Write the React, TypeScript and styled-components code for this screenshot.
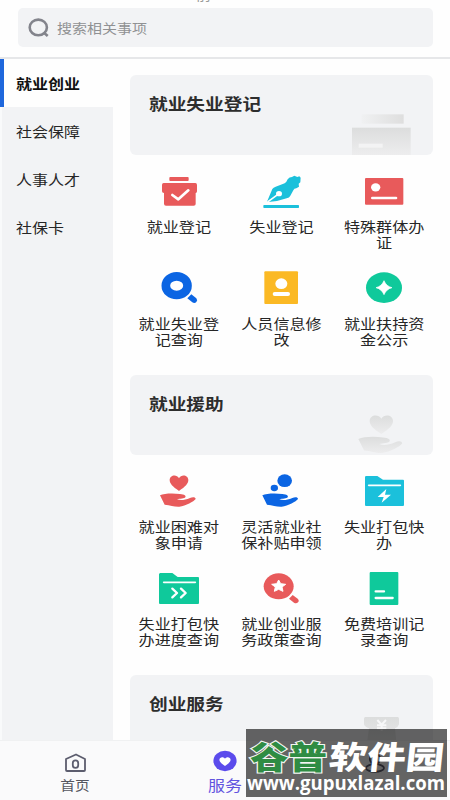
import React from 'react';
import styled, { createGlobalStyle } from 'styled-components';

const GlobalStyle = createGlobalStyle`
  * { box-sizing: border-box; }
  body {
    margin: 0;
    background: #fefefe;
    font-family: "Noto Sans CJK SC", sans-serif;
    overflow: hidden;
  }
`;

const Screen = styled.div`
  position: relative;
  width: 450px;
  height: 800px;
  display: flex;
  flex-direction: column;
  overflow: hidden;
  background: #fefefe;
`;

const StatusStrip = styled.div`
  height: 8px;
  padding-left: 196px;
  overflow: hidden;
  font-size: 15px;
  line-height: 16px;
  color: #999;
  & > span { display: block; margin-top: -14px; }
`;

const SearchBox = styled.div`
  height: 39px;
  margin: 0 17px 10px 18px;
  padding-left: 10px;
  display: flex;
  align-items: center;
  gap: 8px;
  border-radius: 5px;
  background: #f2f3f5;
  flex-shrink: 0;
`;

/* Wide lettering: full advance width with a reduced glyph height. */
const Wide = styled.span<{ $size: number; $color?: string; $weight?: number }>`
  display: block;
  font-size: ${(p) => p.$size}px;
  line-height: 19px;
  font-weight: ${(p) => p.$weight ?? 400};
  color: ${(p) => p.$color ?? '#262626'};
  white-space: pre;
  transform: scaleY(0.87);
`;

const Body = styled.div`
  flex: 1;
  min-height: 0;
  display: flex;
  overflow: hidden;
  border-top: 2px solid #e6e7e9;
`;

const Sidebar = styled.nav`
  width: 113px;
  flex-shrink: 0;
  background: #f2f3f5;
  box-shadow: inset 2px 0 #f9fafb;
`;

const SideItem = styled.div<{ $active?: boolean }>`
  height: 48.2px;
  display: flex;
  align-items: center;
  padding-left: 12px;
  border-left: 4px solid ${(p) => (p.$active ? '#1e67dc' : 'transparent')};
  background: ${(p) => (p.$active ? '#fefefe' : 'transparent')};
`;

const Main = styled.main`
  flex: 1;
  padding: 16px 17px 0;
`;

const Card = styled.div`
  height: 80px;
  padding: 0 22px 0 19px;
  display: flex;
  justify-content: space-between;
  border-radius: 6px;
  background: #f2f3f5;
`;

const CardTitle = styled.h2`
  margin: 18px 0 0;
`;

const CardArt = styled.svg`
  width: 60px;
  height: 42px;
  align-self: flex-end;
`;

const ServiceGrid = styled.div`
  height: 220px;
  margin: 0 -2.5px;
  padding-top: 16px;
  display: grid;
  grid-template-columns: repeat(3, 1fr);
  grid-auto-rows: 96.5px;
`;

const Service = styled.div`
  display: flex;
  flex-direction: column;
  align-items: center;
`;

const Glyph = styled.svg`
  width: 48px;
  height: 40px;
  margin-bottom: 7px;
`;

const Label = styled(Wide)`
  text-align: center;
  transform-origin: top;
`;

const TabBar = styled.footer`
  height: 60px;
  flex-shrink: 0;
  display: grid;
  grid-template-columns: repeat(3, 1fr);
  background: #fafafb;
  border-top: 1px solid #f0f1f2;
`;

const Tab = styled.div`
  display: flex;
  flex-direction: column;
  align-items: center;
  padding-top: 9px;
`;

const TabIcon = styled.svg`
  width: 26px;
  height: 24px;
  margin-bottom: 1px;
`;

const Watermark = styled.div`
  position: absolute;
  left: 246px;
  top: 729px;
  width: 201px;
  height: 68px;
  background: rgba(0, 0, 0, 0.6);
`;

const RED = '#e85a5b';
const CYAN = '#1bc0db';
const BLUE = '#0b65e3';
const YELLOW = '#fbb924';
const GREEN = '#0fc99b';

const HAND =
  'M0 5 C12 -1 38 -2 60 1 C74 2 79 6 76 11 C73 15 61 15 51 17 C60 21 74 20 90 13 C98 9 107 10 107 16 C101 24 78 36 58 39 C43 40 32 34 14 33 Z';
const HEART = 'M28 46 C20 40 0 28 0 14 C0 -2 21 -5 28 8 C35 -5 56 -2 56 14 C56 28 36 40 28 46 Z';

type Entry = { label: string; box: string; art: React.ReactNode };
const line = { fill: 'none', stroke: '#fff', strokeLinecap: 'round', strokeLinejoin: 'round' } as const;

const registration: Entry[] = [
  {
    label: '就业登记',
    box: '90 18 144 120',
    art: (
      <>
        <rect x="133" y="36" width="58" height="12" rx="3" fill={RED} />
        <path d="M116 54H211Q216 54 216 60V79Q216 84 212 84V117Q212 122 206 122H123Q117 122 117 116V84Q111 84 111 79V60Q111 54 116 54Z" fill={RED} />
        <path d="M142 90 160 103 190 76" {...line} strokeWidth="8" />
      </>
    ),
  },
  {
    label: '失业登记',
    box: '397 18 144 120',
    art: (
      <>
        <rect x="416" y="120" width="107" height="9" rx="2" fill={CYAN} />
        <path d="M427 110 443 72Q446 67 453 65L480 55Q486 51 489 43Q494 36 502 36L509 32 518 36 524 34 528 38 527 52 522 56 523 65 515 70Q508 70 506 76L497 92Q494 98 486 100L457 108 437 110Z" fill={CYAN} />
        <path d="M430 110 460 88" {...line} strokeWidth="5" />
        <ellipse cx="463" cy="86" rx="9" ry="8" fill="#fff" />
      </>
    ),
  },
  {
    label: '特殊群体办\n证',
    box: '225 18 144 120',
    art: (
      <>
        <rect x="240" y="39" width="115" height="80" rx="3" fill={RED} />
        <ellipse cx="272" cy="67" rx="14" ry="12.5" fill="#fff" />
        <path d="M262 99H333" {...line} strokeWidth="8" />
      </>
    ),
  },
  {
    label: '就业失业登\n记查询',
    box: '90 24 144 120',
    art: (
      <>
        <ellipse cx="155" cy="77" rx="32.5" ry="28" fill="none" stroke={BLUE} strokeWidth="26" />
        <path d="M199 103 214 115Q219 121 214 126 209 131 202 127L187 115Z" fill={BLUE} />
      </>
    ),
  },
  {
    label: '人员信息修\n改',
    box: '397 24 144 120',
    art: (
      <>
        <rect x="419" y="34" width="101" height="98" rx="3" fill={YELLOW} />
        <ellipse cx="470" cy="71" rx="18" ry="16" fill="#fff" />
        <path d="M450 102H490" {...line} strokeWidth="12" />
      </>
    ),
  },
  {
    label: '就业扶持资\n金公示',
    box: '225 24 144 120',
    art: (
      <>
        <ellipse cx="297" cy="83" rx="54" ry="46" fill={GREEN} />
        <path d="M297 62Q304 79 321 83Q304 87 297 104Q290 87 273 83Q290 79 297 62Z" fill="#fff" stroke="#fff" strokeWidth="2" strokeLinejoin="round" />
      </>
    ),
  },
];

const assistance: Entry[] = [
  {
    label: '就业困难对\n象申请',
    box: '90 18 144 120',
    art: (
      <>
        <path d={HEART} transform="translate(134 32)" fill={RED} />
        <path d={HAND} transform="translate(105 86)" fill={RED} />
      </>
    ),
  },
  {
    label: '灵活就业社\n保补贴申领',
    box: '397 18 144 120',
    art: (
      <>
        <ellipse cx="480" cy="47" rx="22" ry="19" fill={BLUE} />
        <ellipse cx="449" cy="69" rx="11" ry="9.5" fill={BLUE} />
        <path d={HAND} transform="translate(413 86)" fill={BLUE} />
      </>
    ),
  },
  {
    label: '失业打包快\n办',
    box: '225 18 144 120',
    art: (
      <>
        <path d="M242 33H277L294 44H354Q357 44 357 47V120Q357 123 354 123H243Q240 123 240 120V36Z" fill={CYAN} />
        <path d="M251 61H346" {...line} strokeWidth="5" />
        <path d="M304 72 278 96H296L290 113 318 89H300Z" fill="#fff" />
      </>
    ),
  },
  {
    label: '失业打包快\n办进度查询',
    box: '90 306 144 120',
    art: (
      <>
        <path d="M105 321H142L158 333H219Q222 333 222 336V411Q222 414 219 414H105Q102 414 102 411V324Z" fill={GREEN} />
        <path d="M116 349H211" {...line} strokeWidth="5" />
        <path d="M142 368 156 381 142 394M168 368 182 381 168 394" {...line} strokeWidth="7" />
      </>
    ),
  },
  {
    label: '就业创业服\n务政策查询',
    box: '397 306 144 120',
    art: (
      <>
        <ellipse cx="462" cy="361" rx="45" ry="39" fill={RED} />
        <path d="M462 342 468 353 483 355 472 363 475 376 462 370 449 376 452 363 441 355 456 353Z" fill="#fff" stroke="#fff" strokeWidth="3" strokeLinejoin="round" />
        <path d="M504 387 519 398Q525 404 520 409 515 414 508 410L493 398Z" fill={RED} />
      </>
    ),
  },
  {
    label: '免费培训记\n录查询',
    box: '225 306 144 120',
    art: (
      <>
        <rect x="254" y="318" width="86" height="99" rx="3" fill={GREEN} />
        <path d="M272 376H297M272 396H323" {...line} strokeWidth="7" />
      </>
    ),
  },
];

const Heading = ({ title, box, children }: { title: string; box: string; children: React.ReactNode }) => (
  <Card>
    <CardTitle>
      <Wide $size={18.7} $weight={700} $color="#2d2d2d">{title}</Wide>
    </CardTitle>
    <CardArt viewBox={box}>
      <defs>
        <linearGradient id="fadeAcross"><stop stopColor="#f0f1f2" /><stop offset="1" stopColor="#dedede" /></linearGradient>
        <linearGradient id="fadeDown" x2="0" y2="1"><stop stopColor="#dcdddd" /><stop offset="1" stopColor="#ededee" /></linearGradient>
      </defs>
      {children}
    </CardArt>
  </Card>
);

const Services = ({ entries }: { entries: Entry[] }) => (
  <ServiceGrid>
    {entries.map((e) => (
      <Service key={e.label}>
        <Glyph viewBox={e.box}>{e.art}</Glyph>
        <Label $size={16.1}>{e.label}</Label>
      </Service>
    ))}
  </ServiceGrid>
);

export default function App() {
  return (
    <Screen>
      <GlobalStyle />
      <StatusStrip><span>前</span></StatusStrip>
      <SearchBox>
        <svg width="21" height="20" viewBox="0 0 21 20" fill="none" stroke="#83848c" strokeWidth="2.6">
          <ellipse cx="10.3" cy="9.4" rx="8.6" ry="7.8" />
          <path d="m15.7 14.5 4 3.5" />
        </svg>
        <Wide $size={15} $color="#909193">搜索相关事项</Wide>
      </SearchBox>
      <Body>
        <Sidebar>
          <SideItem $active><Wide $size={16} $weight={700} $color="#111">就业创业</Wide></SideItem>
          {['社会保障', '人事人才', '社保卡'].map((t) => (
            <SideItem key={t}><Wide $size={16}>{t}</Wide></SideItem>
          ))}
        </Sidebar>
        <Main>
          <Heading title="就业失业登记" box="378 339 180 126">
            <rect x="410" y="343" width="126" height="28" fill="url(#fadeAcross)" />
            <rect x="381" y="383" width="176" height="82" fill="url(#fadeDown)" />
            <rect x="401" y="431" width="72" height="12" fill="#f3f3f4" />
          </Heading>
          <Services entries={registration} />
          <Heading title="就业援助" box="678 144 180 126">
            <path d={HEART} transform="translate(734 152) scale(1.25 1.2)" fill="url(#fadeDown)" />
            <path d={HAND} transform="translate(700 216) scale(1.23)" fill="url(#fadeDown)" />
          </Heading>
          <Services entries={assistance} />
          <Heading title="创业服务" box="348 96 180 126">
            <path d="M391 108H488Q492 108 492 113V130Q490 138 480 142L488 222H391L402 142Q389 138 387 130V113Q387 108 391 108Z" fill="url(#fadeDown)" />
            <path d="M427 117 440 131 453 117M440 131V150M426 133H454M426 142H454" fill="none" stroke="#f7f7f8" strokeWidth="6" />
          </Heading>
        </Main>
      </Body>
      <TabBar>
        <Tab>
          <TabIcon viewBox="0 0 26 24" fill="none" stroke="#5c5d6e" strokeWidth="1.8" strokeLinejoin="round">
            <path d="M4 9 14 4.5 23 9V20Q23 21 22 21H5Q4 21 4 20Z" />
            <rect x="10.8" y="10.3" width="5.4" height="7.6" rx="2.7" />
          </TabIcon>
          <Wide $size={14.7} $color="#55565f">首页</Wide>
        </Tab>
        <Tab>
          <TabIcon viewBox="0 0 26 24">
            <ellipse cx="13" cy="11" rx="11.6" ry="10.2" fill="#5b4bec" />
            <path d={HEART} transform="translate(7.4 7.2) scale(.2 .19)" fill="#fff" />
          </TabIcon>
          <Wide $size={17} $color="#6254df">服务</Wide>
        </Tab>
        <Tab>
          <TabIcon viewBox="0 0 26 24" fill="none" stroke="#5c5d6e" strokeWidth="1.8">
            <ellipse cx="13" cy="9" rx="5.2" ry="5" />
            <ellipse cx="13" cy="18" rx="9" ry="3.8" />
          </TabIcon>
        </Tab>
      </TabBar>
      <Watermark>
        <svg width="201" height="68" viewBox="0 0 201 68" fontWeight="900">
          <g fontFamily="'Noto Sans CJK SC', sans-serif" fontSize="32">
            <text x="4" y="39.5" textLength="77" lengthAdjust="spacingAndGlyphs" fill="#2f8c43" stroke="#f3f7f3" strokeWidth="2.2" paintOrder="stroke">谷普</text>
            <text transform="translate(82 39.5) skewX(-6)" textLength="115" lengthAdjust="spacingAndGlyphs" fill="#fff">软件园</text>
          </g>
          <text x="1" y="60.5" textLength="198" lengthAdjust="spacingAndGlyphs" fontFamily="'Open Sans', sans-serif" fontWeight="700" fontSize="20" fill="#fff">www.gupuxlazal.com</text>
        </svg>
      </Watermark>
    </Screen>
  );
}
